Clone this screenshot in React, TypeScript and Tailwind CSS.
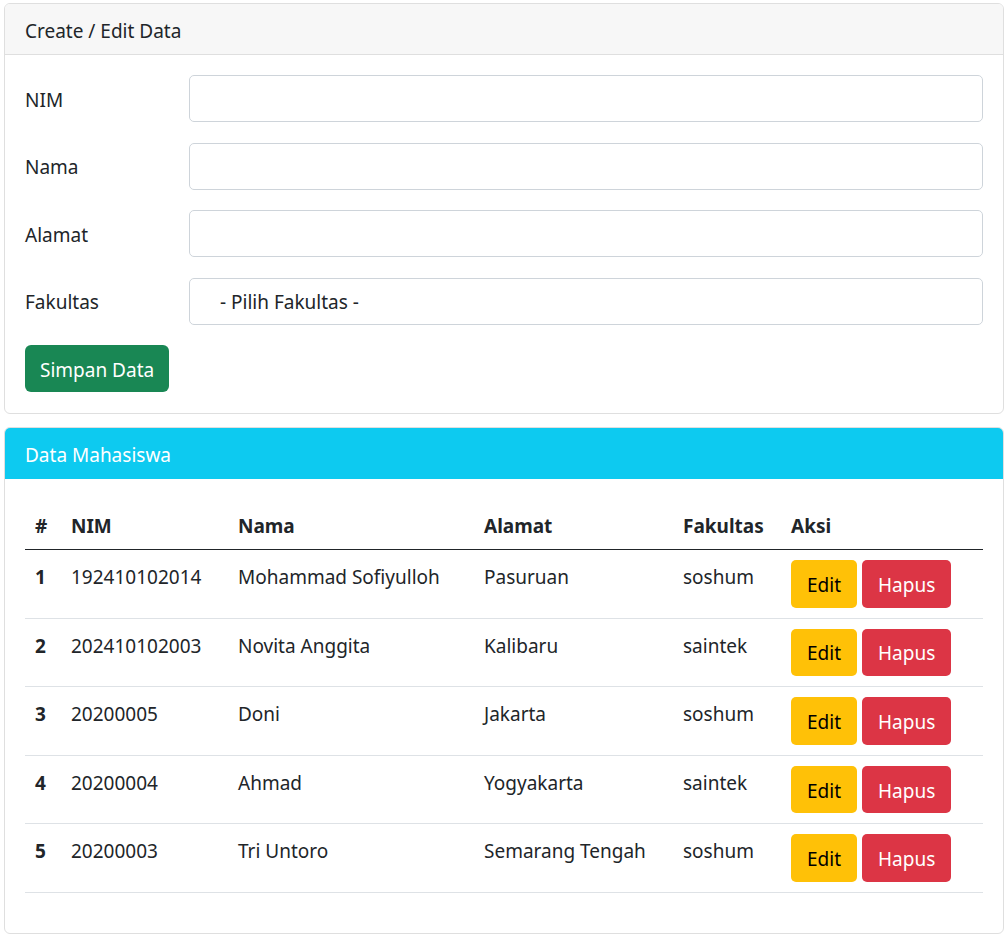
const rows = [
  { nim: "192410102014", nama: "Mohammad Sofiyulloh", alamat: "Pasuruan", fakultas: "soshum" },
  { nim: "202410102003", nama: "Novita Anggita", alamat: "Kalibaru", fakultas: "saintek" },
  { nim: "20200005", nama: "Doni", alamat: "Jakarta", fakultas: "soshum" },
  { nim: "20200004", nama: "Ahmad", alamat: "Yogyakarta", fakultas: "saintek" },
  { nim: "20200003", nama: "Tri Untoro", alamat: "Semarang Tengah", fakultas: "soshum" },
];

function Field({ label, select }: { label: string; select?: boolean }) {
  return (
    <div className="flex items-center mb-[20.5px]">
      <label className="w-[164px] leading-[30px] pt-[2px]">{label}</label>
      <div className="flex-1 h-[47px] border border-[#ced4da] rounded-[5px] bg-white flex items-center pl-[30px] pt-[2px]">
        {select && <span>- Pilih Fakultas -</span>}
      </div>
    </div>
  );
}

export default function App() {
  return (
    <div
      className="pt-[3px] pl-[4px] text-[19px] leading-[30px] text-[#212529] bg-white min-h-[938px]"
      style={{ fontFamily: '"Segoe UI", "Noto Sans", sans-serif' }}
    >
      <div className="w-[1000px] border border-[#dfdfdf] rounded-[6px] overflow-hidden">
        <div className="h-[51px] bg-[#f7f7f7] border-b border-[#dfdfdf] px-[20px] pt-[3px] flex items-center">
          Create / Edit Data
        </div>
        <div className="px-[20px] pt-[20px] pb-[21px]">
          <Field label="NIM" />
          <Field label="Nama" />
          <Field label="Alamat" />
          <Field label="Fakultas" select />
          <button className="h-[47px] px-[15px] pt-[2px] bg-[#198754] text-white rounded-[6px] block">
            Simpan Data
          </button>
        </div>
      </div>

      <div className="w-[1000px] mt-[13px] border border-[#dfdfdf] rounded-[6px] overflow-hidden">
        <div className="h-[51px] bg-[#0dcaf0] text-white px-[20px] pt-[3px] flex items-center">
          Data Mahasiswa
        </div>
        <div className="p-[20px]">
          <table className="w-full mb-[20px] border-collapse">
            <thead>
              <tr className="border-b-[1.5px] border-[#212529] text-left">
                <th className="w-[36px] px-[10px] pt-[12px] pb-[8px] font-bold">#</th>
                <th className="w-[167px] px-[10px] pt-[12px] pb-[8px] font-bold">NIM</th>
                <th className="w-[246px] px-[10px] pt-[12px] pb-[8px] font-bold">Nama</th>
                <th className="w-[199px] px-[10px] pt-[12px] pb-[8px] font-bold">Alamat</th>
                <th className="w-[108px] px-[10px] pt-[12px] pb-[8px] font-bold">Fakultas</th>
                <th className="px-[10px] pt-[12px] pb-[8px] font-bold">Aksi</th>
              </tr>
            </thead>
            <tbody>
              {rows.map((r, i) => (
                <tr key={r.nim} className="border-b border-[#dee2e6] align-top">
                  <td className="px-[10px] pt-[12px] font-bold">{i + 1}</td>
                  <td className="px-[10px] pt-[12px]">{r.nim}</td>
                  <td className="px-[10px] pt-[12px]">{r.nama}</td>
                  <td className="px-[10px] pt-[12px]">{r.alamat}</td>
                  <td className="px-[10px] pt-[12px]">{r.fakultas}</td>
                  <td className="px-[10px] py-[10px]">
                    <div className="flex gap-[5px]">
                      <button className="h-[47.6px] px-[16px] pt-[2px] bg-[#ffc107] text-black rounded-[5px]">Edit</button>
                      <button className="h-[47.6px] px-[16px] pt-[2px] bg-[#dc3545] text-white rounded-[5px]">Hapus</button>
                    </div>
                  </td>
                </tr>
              ))}
            </tbody>
          </table>
        </div>
      </div>
    </div>
  );
}
